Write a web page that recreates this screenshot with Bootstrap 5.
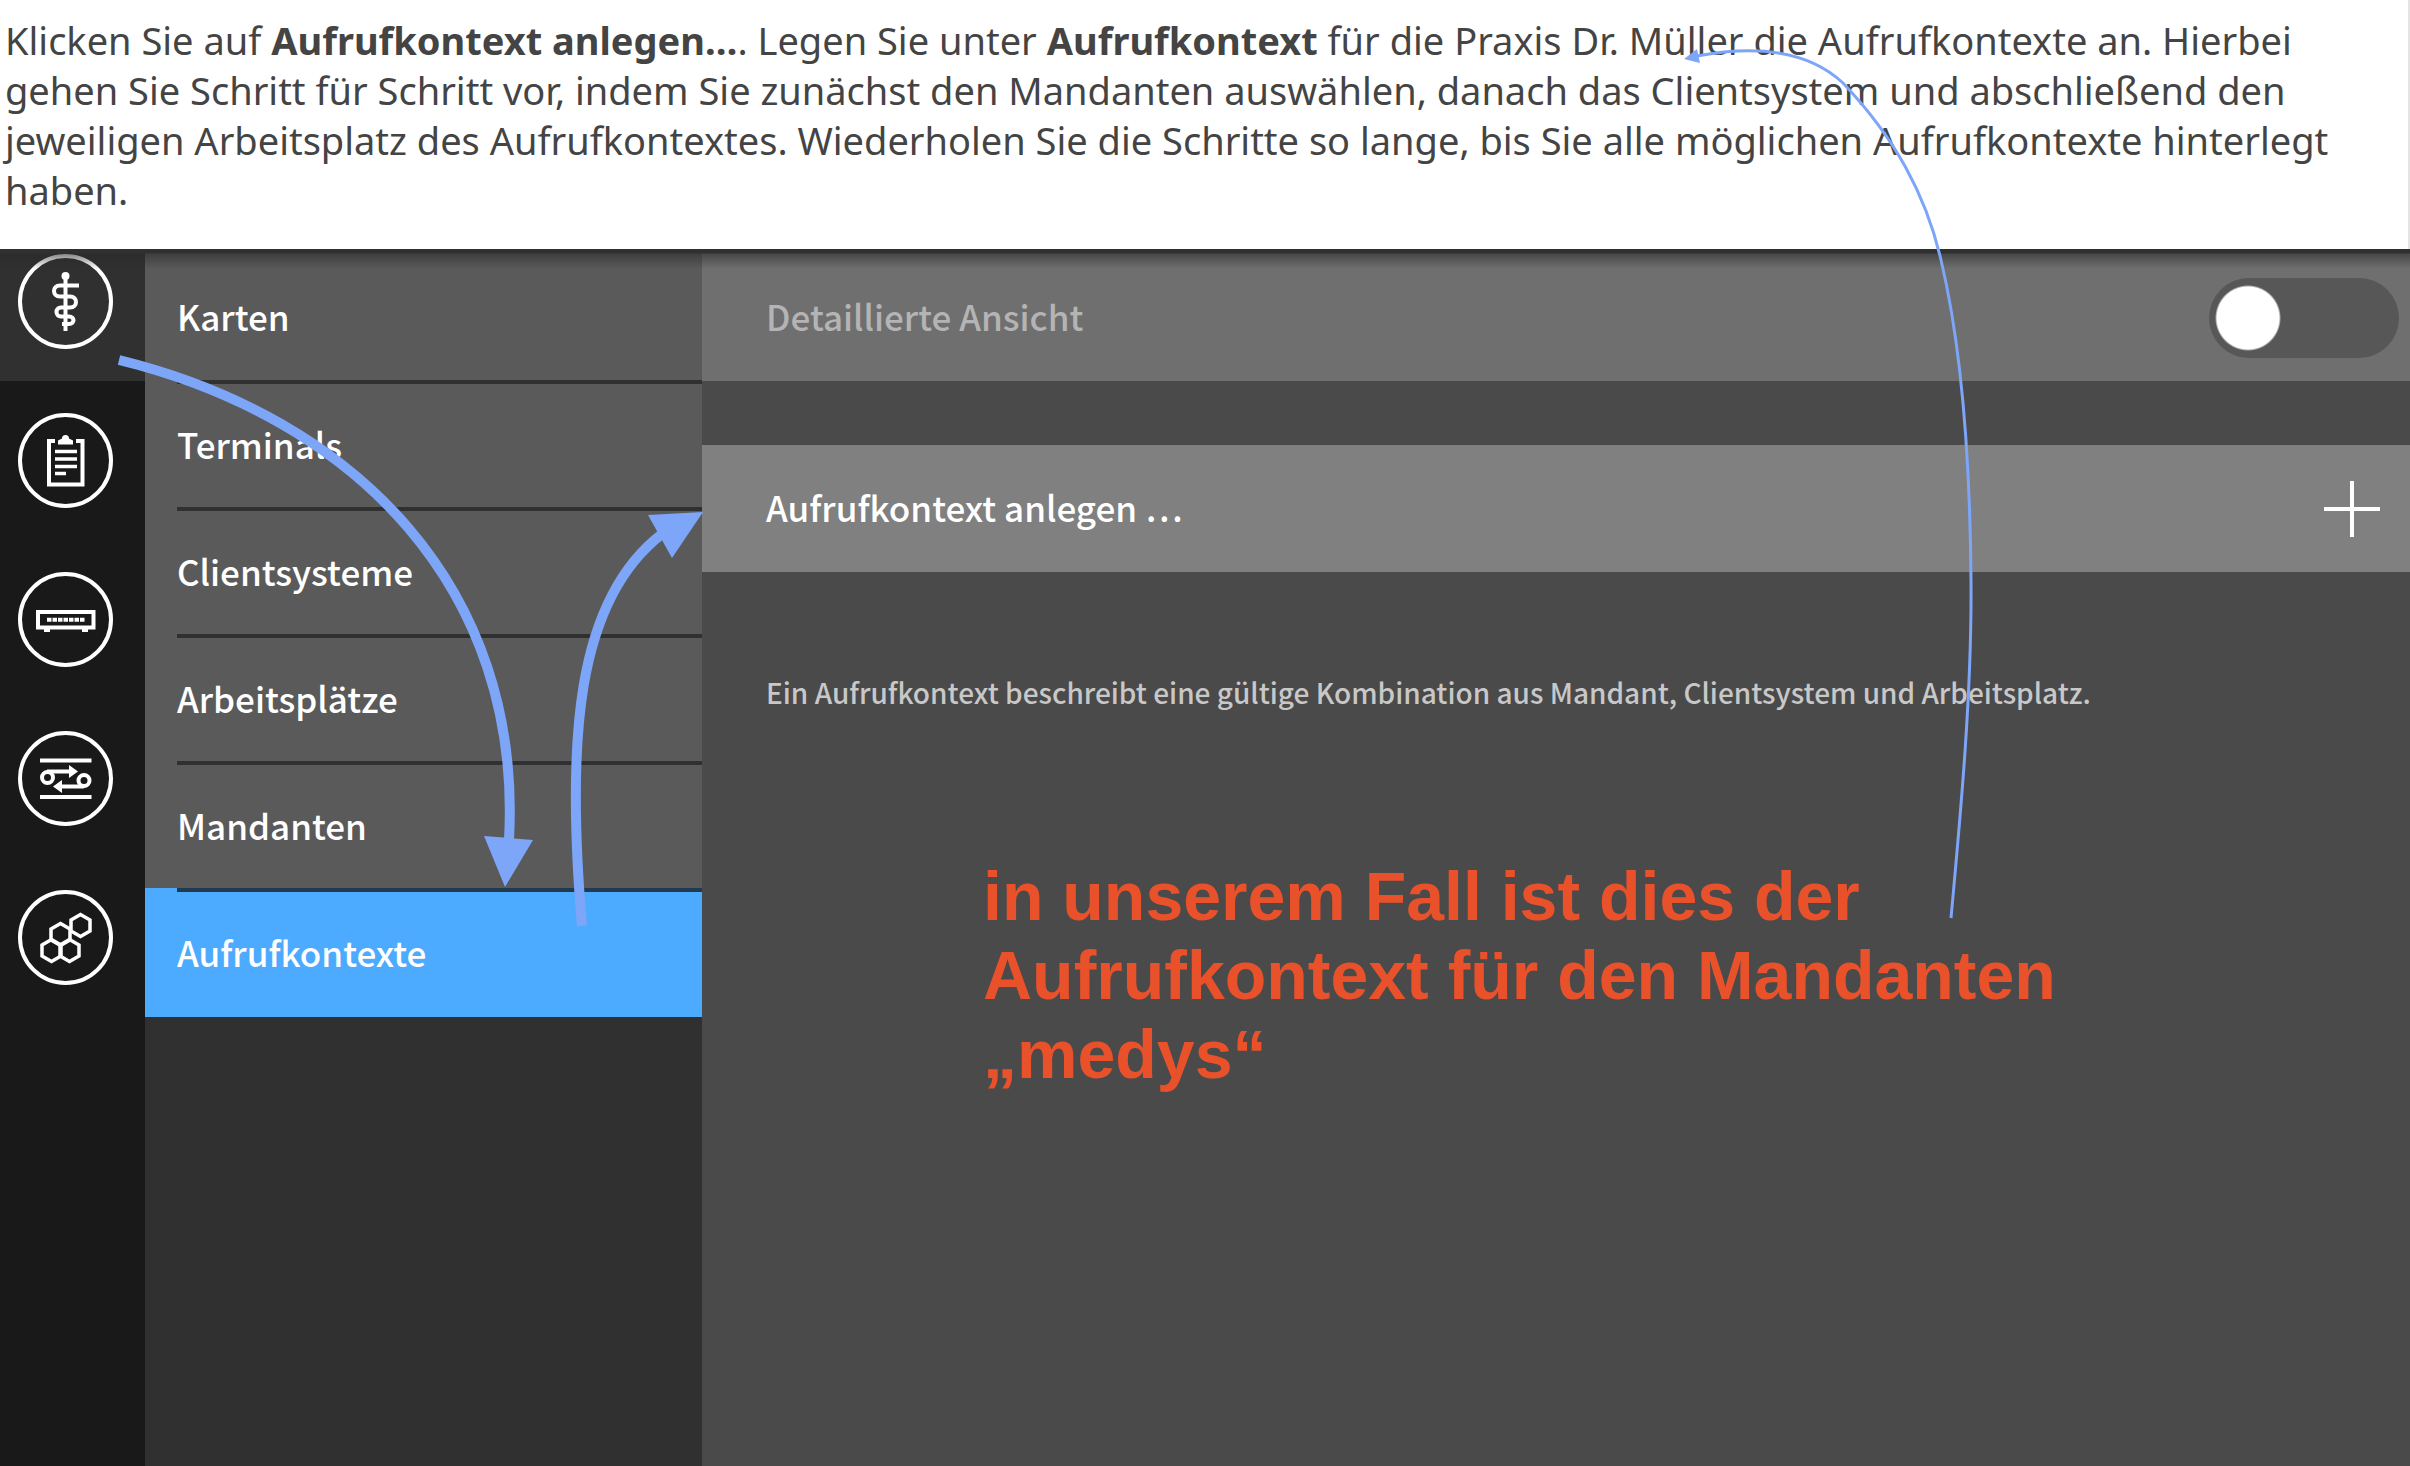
<!DOCTYPE html>
<html lang="de">
<head>
<meta charset="utf-8">
<meta name="viewport" content="width=device-width, initial-scale=1">
<title>Aufrufkontexte</title>
<link href="https://cdn.jsdelivr.net/npm/bootstrap@5.3.0/dist/css/bootstrap.min.css" rel="stylesheet">
<style>
  body { background: #4a4a4a; overflow-x: hidden; }
  .guide {
    font: 400 38px/50px "Noto Sans", sans-serif;
    color: #444; padding: 15px 0 34px 5px; border-right: 2px solid #e4e4e4;
  }
  .konnektor { font-family: "Noto Sans CJK SC", sans-serif; font-weight: 500; font-size: 35px; line-height: 52px; }
  .konnektor::before {
    content: ""; position: absolute; inset: 0 0 auto; height: 20px; pointer-events: none; z-index: 1;
    background: linear-gradient(#303030 4px, rgba(40,40,40,.55) 5px, rgba(40,40,40,0));
  }
  .rail { width: 145px; background: #191919; }
  .rail a { height: 159px; padding: 32px 0 32px 18px; }
  .rail a.active { height: 132px; padding-top: 5px; background: #303030; }
  .rail svg { width: 95px; height: 95px; display: block; }
  .menu { width: 557px; background: #303030; }
  .menu a { background: #5a5a5a; color: #fff; padding-left: 32px; text-decoration: none; }
  .menu a span { display: block; height: 127px; padding-top: 34px; border-top: 4px solid #303030; }
  .menu a:first-child span { height: 131px; padding-top: 41px; border-top: 0; }
  .menu a.active { background: #4dabff; }
  .menu a.active span { height: 129px; border-color: #223a50; }
  .view-row { height: 132px; padding: 5px 11px 0 64px; background: #6f6f6f; color: #b4b4b4; }
  .view-row label, .create-row span { padding-bottom: 4px; }
  .konnektor .form-check-input {
    width: 190px; height: 80px; margin: 0; border: 0; border-radius: 40px;
    background: radial-gradient(circle at 39px 40px, #fff 31px, transparent 33px) #575757;
  }
  .create-row {
    height: 127px; margin-top: 64px; padding: 0 30px 0 64px; border: 0;
    background: #808080; color: #fff; font-weight: 500;
  }
  .create-row svg { width: 56px; height: 56px; }
  .hint { font-size: 28px; line-height: 40px; color: #c8c8c8; margin: 100px 64px 0; }
  .remark { font: bold 68px/79px "Liberation Sans", sans-serif; color: #e9512b; margin: 145px 0 0 281px; max-width: 1200px; }
  .arrows { left: 0; top: 0; width: 2410px; height: 1466px; pointer-events: none; z-index: 2; }
</style>
<script src="https://cdn.jsdelivr.net/npm/bootstrap@5.3.0/dist/js/bootstrap.bundle.min.js"></script>
</head>
<body>
<div class="position-relative d-flex flex-column min-vh-100 overflow-hidden">
  <header class="guide bg-white">
    <p class="m-0">Klicken Sie auf <strong>Aufrufkontext anlegen…</strong>. Legen Sie unter <strong>Aufrufkontext</strong> für die Praxis Dr. Müller die Aufrufkontexte an. Hierbei<br>
    gehen Sie Schritt für Schritt vor, indem Sie zunächst den Mandanten auswählen, danach das Clientsystem und abschließend den<br>
    jeweiligen Arbeitsplatz des Aufrufkontextes. Wiederholen Sie die Schritte so lange, bis Sie alle möglichen Aufrufkontexte hinterlegt<br>
    haben.</p>
  </header>

  <div class="konnektor position-relative d-flex flex-grow-1">
    <nav class="rail flex-shrink-0 d-flex flex-column" aria-label="Bereiche">
      <a href="#" class="active" aria-label="Praxis">
        <svg viewBox="0 0 95 95" fill="none" stroke="#fff" stroke-width="4">
          <circle cx="47.5" cy="47.5" r="45.5"/>
          <path d="M47.5 20V77"/><circle cx="47.5" cy="22" r="4" fill="#fff" stroke="none"/>
          <path d="M61 31.500H42c-8 0-8 11 0 11h10c8 0 8 11 0 11h-9c-6 0-6 9 0 9h8c6 0 6 7.500 0 7.500h-7"/>
        </svg>
      </a>
      <a href="#" aria-label="Protokoll">
        <svg viewBox="0 0 95 95" fill="none" stroke="#fff" stroke-width="4">
          <circle cx="47.5" cy="47.5" r="45.5"/>
          <path d="M37 28H31V71.500H64.500V28H58"/>
          <path d="M40 31.500v-4l4-2a3.500 3.500 0 0 1 7 0l4 2v4z" fill="#fff" stroke="none"/>
          <path d="M37 38.500H59M37 46H59M37 53.500H59M37 60.500H48" stroke-width="3.500"/>
        </svg>
      </a>
      <a href="#" aria-label="Konnektor">
        <svg viewBox="0 0 95 95" fill="none" stroke="#fff" stroke-width="4">
          <circle cx="47.5" cy="47.5" r="45.5"/>
          <path d="M20 40H75.500V55.500H20z"/>
          <path d="M29 47.800H67" stroke-dasharray="4.500 1"/>
          <path d="M26 58.500h6M64 58.500h6" stroke-width="3"/>
        </svg>
      </a>
      <a href="#" aria-label="Netzwerk">
        <svg viewBox="0 0 95 95" fill="none" stroke="#fff" stroke-width="4">
          <circle cx="47.5" cy="47.5" r="45.5"/>
          <path d="M22 29.500H73.500M22 66H73.500"/>
          <circle cx="29.500" cy="46.500" r="5.500"/><circle cx="66" cy="49.500" r="5.500"/>
          <path d="M29 40.500H53M66 55.500H43"/>
          <path d="M51 34l9 6.500l-9 6.500zM44 49l-9 6.500l9 6.500z" fill="#fff" stroke="none"/>
        </svg>
      </a>
      <a href="#" aria-label="Module">
        <svg viewBox="0 0 95 95" fill="none" stroke="#fff" stroke-width="3.500">
          <circle cx="47.5" cy="47.5" r="45.5" stroke-width="4"/>
          <path id="hex" d="M62.500 24.500l9.500 5.500v11l-9.500 5.500l-9.500-5.500v-11z"/>
          <use href="#hex" x="-20" y="9"/><use href="#hex" x="-29" y="25"/><use href="#hex" x="-11" y="25"/>
        </svg>
      </a>
    </nav>

    <nav class="menu flex-shrink-0 d-flex flex-column" aria-label="Praxis">
      <a href="#"><span>Karten</span></a>
      <a href="#"><span>Terminals</span></a>
      <a href="#"><span>Clientsysteme</span></a>
      <a href="#"><span>Arbeitsplätze</span></a>
      <a href="#"><span>Mandanten</span></a>
      <a href="#" class="active" aria-current="page"><span>Aufrufkontexte</span></a>
    </nav>

    <main class="flex-grow-1">
      <div class="view-row d-flex align-items-center justify-content-between">
        <label for="detail">Detaillierte Ansicht</label>
        <input class="form-check-input" type="checkbox" role="switch" id="detail">
      </div>
      <button type="button" class="create-row w-100 d-flex align-items-center justify-content-between text-start">
        <span>Aufrufkontext anlegen …</span>
        <svg viewBox="0 0 56 56" stroke="#fff" stroke-width="4" aria-hidden="true"><path d="M28 0V56M0 28H56"/></svg>
      </button>
      <p class="hint">Ein Aufrufkontext beschreibt eine gültige Kombination aus Mandant, Clientsystem und Arbeitsplatz.</p>
      <p class="remark">in unserem Fall ist dies der Aufrufkontext für den Mandanten „medys“</p>
    </main>
  </div>

  <svg class="arrows position-absolute" viewBox="0 0 2410 1466" fill="none" stroke="#7da5f8" aria-hidden="true">
    <path stroke-width="10" d="M119 360C355 418 523 588 509 840"/>
    <path stroke-width="10" d="M582 926C566 740 576 600 662 534"/>
    <path stroke-width="3" d="M1951 918C1961 810 1972 690 1971 580C1970 450 1960 340 1941 260C1926 195 1895 138 1843 83C1810 52 1762 44 1697 56"/>
    <path fill="#7da5f8" stroke="none" d="M484 836L533 840L505 887zM648 515L703 512L672 558zM1684 59L1697 49L1700 63z"/>
  </svg>
</div>
</body>
</html>
